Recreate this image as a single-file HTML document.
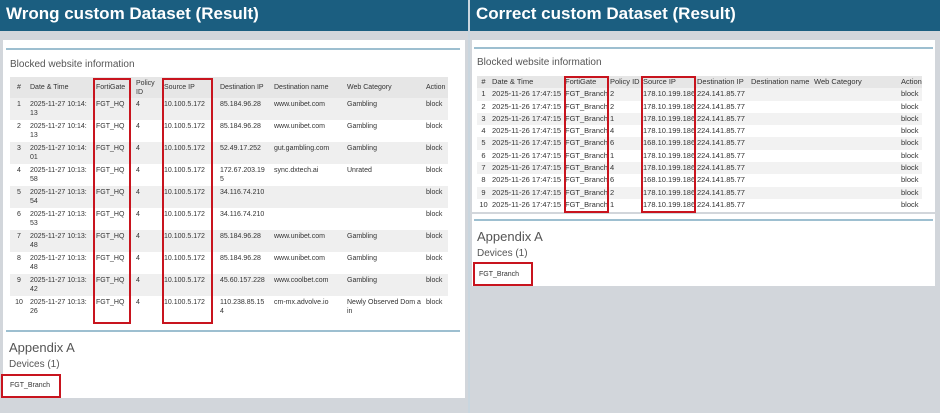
<!DOCTYPE html>
<html><head><meta charset="utf-8"><style>
*{margin:0;padding:0;box-sizing:border-box}
body{width:940px;height:413px;background:#d2d6db;font-family:"Liberation Sans",sans-serif;position:relative;overflow:hidden;color:#333}
.hdr{position:absolute;top:0;height:31px;background:#1b5e80;color:#fff;font-weight:bold;font-size:17px;line-height:27px;padding-left:6px}
.panel{position:absolute;background:#fff}
.bl{position:absolute;height:2px;background:#9dbfd0}
.t{position:absolute;font-size:10px;color:#555}
table{position:absolute;border-collapse:collapse;table-layout:fixed;font-size:7px;color:#333}
td{vertical-align:top;padding:2px 2px 0 2px;line-height:9px;overflow:hidden;white-space:nowrap}
.L td{height:22px;white-space:normal;word-break:break-all}
.L tr:nth-child(even) td{background:#efefef}
.L tr.h td{background:#e6e6e6;height:21px;vertical-align:middle;padding-top:0;word-break:normal}
.R td{height:12.3px;padding:1px 2px 0 2px;line-height:10px;font-size:7.5px}
.R tr:nth-child(even) td{background:#f2f2f2}
.R tr.h td{background:#e6e6e6}
.box{position:absolute;border:2px solid #c8141e}
</style></head><body>
<div class="hdr" style="left:0;width:468px">Wrong custom Dataset (Result)</div>
<div class="hdr" style="left:470px;width:470px">Correct custom Dataset (Result)</div>
<div style="position:absolute;left:468px;top:0;width:2px;height:413px;background:#c9d6df"></div>

<div class="panel" style="left:3px;top:40px;width:462px;height:358px"></div>
<div class="bl" style="left:6px;top:48px;width:454px"></div>
<div class="t" style="left:10px;top:59px">Blocked website information</div>
<table class="L" style="left:10px;top:77px;width:438px">
<colgroup><col style="width:18px"><col style="width:66px"><col style="width:40px"><col style="width:28px"><col style="width:56px"><col style="width:54px"><col style="width:73px"><col style="width:79px"><col style="width:24px"></colgroup>
<tr class="h"><td style="text-align:center">#</td><td>Date &amp; Time</td><td>FortiGate</td><td>Policy ID</td><td>Source IP</td><td>Destination IP</td><td>Destination name</td><td>Web Category</td><td>Action</td></tr>
<tr><td style="text-align:center">1</td><td>2025-11-27 10:14: 13</td><td>FGT_HQ</td><td>4</td><td>10.100.5.172</td><td>85.184.96.28</td><td>www.unibet.com</td><td>Gambling</td><td>block</td></tr>
<tr><td style="text-align:center">2</td><td>2025-11-27 10:14: 13</td><td>FGT_HQ</td><td>4</td><td>10.100.5.172</td><td>85.184.96.28</td><td>www.unibet.com</td><td>Gambling</td><td>block</td></tr>
<tr><td style="text-align:center">3</td><td>2025-11-27 10:14: 01</td><td>FGT_HQ</td><td>4</td><td>10.100.5.172</td><td>52.49.17.252</td><td>gut.gambling.com</td><td>Gambling</td><td>block</td></tr>
<tr><td style="text-align:center">4</td><td>2025-11-27 10:13: 58</td><td>FGT_HQ</td><td>4</td><td>10.100.5.172</td><td>172.67.203.19 5</td><td>sync.dxtech.ai</td><td>Unrated</td><td>block</td></tr>
<tr><td style="text-align:center">5</td><td>2025-11-27 10:13: 54</td><td>FGT_HQ</td><td>4</td><td>10.100.5.172</td><td>34.116.74.210</td><td></td><td></td><td>block</td></tr>
<tr><td style="text-align:center">6</td><td>2025-11-27 10:13: 53</td><td>FGT_HQ</td><td>4</td><td>10.100.5.172</td><td>34.116.74.210</td><td></td><td></td><td>block</td></tr>
<tr><td style="text-align:center">7</td><td>2025-11-27 10:13: 48</td><td>FGT_HQ</td><td>4</td><td>10.100.5.172</td><td>85.184.96.28</td><td>www.unibet.com</td><td>Gambling</td><td>block</td></tr>
<tr><td style="text-align:center">8</td><td>2025-11-27 10:13: 48</td><td>FGT_HQ</td><td>4</td><td>10.100.5.172</td><td>85.184.96.28</td><td>www.unibet.com</td><td>Gambling</td><td>block</td></tr>
<tr><td style="text-align:center">9</td><td>2025-11-27 10:13: 42</td><td>FGT_HQ</td><td>4</td><td>10.100.5.172</td><td>45.60.157.228</td><td>www.coolbet.com</td><td>Gambling</td><td>block</td></tr>
<tr><td style="text-align:center">10</td><td>2025-11-27 10:13: 26</td><td>FGT_HQ</td><td>4</td><td>10.100.5.172</td><td>110.238.85.15 4</td><td>cm-mx.advolve.io</td><td>Newly Observed Dom ain</td><td>block</td></tr>
</table>
<div class="box" style="left:93px;top:78px;width:38px;height:246px"></div>
<div class="box" style="left:162px;top:78px;width:51px;height:246px"></div>
<div class="bl" style="left:6px;top:330px;width:454px"></div>
<div class="t" style="left:9px;top:340px;font-size:13px">Appendix A</div>
<div class="t" style="left:9px;top:359px;font-size:10px">Devices (1)</div>
<div class="box" style="left:1px;top:374px;width:60px;height:24px"></div>
<div style="position:absolute;left:10px;top:382px;font-size:7px;color:#333">FGT_Branch</div>

<div class="panel" style="left:472px;top:40px;width:463px;height:172px"></div>
<div class="panel" style="left:472px;top:214px;width:463px;height:72px"></div>
<div class="bl" style="left:474px;top:47px;width:459px"></div>
<div class="t" style="left:477px;top:57px">Blocked website information</div>
<table class="R" style="left:477px;top:76px;width:445px">
<colgroup><col style="width:13px"><col style="width:73px"><col style="width:45px"><col style="width:33px"><col style="width:54px"><col style="width:54px"><col style="width:63px"><col style="width:87px"><col style="width:23px"></colgroup>
<tr class="h"><td style="text-align:center">#</td><td>Date &amp; Time</td><td>FortiGate</td><td>Policy ID</td><td>Source IP</td><td>Destination IP</td><td>Destination name</td><td>Web Category</td><td>Action</td></tr>
<tr><td style="text-align:center">1</td><td>2025-11-26 17:47:15</td><td>FGT_Branch</td><td>2</td><td>178.10.199.186</td><td>224.141.85.77</td><td></td><td></td><td>block</td></tr>
<tr><td style="text-align:center">2</td><td>2025-11-26 17:47:15</td><td>FGT_Branch</td><td>2</td><td>178.10.199.186</td><td>224.141.85.77</td><td></td><td></td><td>block</td></tr>
<tr><td style="text-align:center">3</td><td>2025-11-26 17:47:15</td><td>FGT_Branch</td><td>1</td><td>178.10.199.186</td><td>224.141.85.77</td><td></td><td></td><td>block</td></tr>
<tr><td style="text-align:center">4</td><td>2025-11-26 17:47:15</td><td>FGT_Branch</td><td>4</td><td>178.10.199.186</td><td>224.141.85.77</td><td></td><td></td><td>block</td></tr>
<tr><td style="text-align:center">5</td><td>2025-11-26 17:47:15</td><td>FGT_Branch</td><td>6</td><td>168.10.199.186</td><td>224.141.85.77</td><td></td><td></td><td>block</td></tr>
<tr><td style="text-align:center">6</td><td>2025-11-26 17:47:15</td><td>FGT_Branch</td><td>1</td><td>178.10.199.186</td><td>224.141.85.77</td><td></td><td></td><td>block</td></tr>
<tr><td style="text-align:center">7</td><td>2025-11-26 17:47:15</td><td>FGT_Branch</td><td>4</td><td>178.10.199.186</td><td>224.141.85.77</td><td></td><td></td><td>block</td></tr>
<tr><td style="text-align:center">8</td><td>2025-11-26 17:47:15</td><td>FGT_Branch</td><td>6</td><td>168.10.199.186</td><td>224.141.85.77</td><td></td><td></td><td>block</td></tr>
<tr><td style="text-align:center">9</td><td>2025-11-26 17:47:15</td><td>FGT_Branch</td><td>2</td><td>178.10.199.186</td><td>224.141.85.77</td><td></td><td></td><td>block</td></tr>
<tr><td style="text-align:center">10</td><td>2025-11-26 17:47:15</td><td>FGT_Branch</td><td>1</td><td>178.10.199.186</td><td>224.141.85.77</td><td></td><td></td><td>block</td></tr>
</table>
<div class="box" style="left:564px;top:76px;width:45px;height:137px"></div>
<div class="box" style="left:641px;top:76px;width:55px;height:137px"></div>
<div class="bl" style="left:474px;top:219px;width:459px"></div>
<div class="t" style="left:477px;top:229px;font-size:13px">Appendix A</div>
<div class="t" style="left:477px;top:248px;font-size:10px">Devices (1)</div>
<div class="box" style="left:473px;top:262px;width:60px;height:24px"></div>
<div style="position:absolute;left:479px;top:271px;font-size:7px;color:#333">FGT_Branch</div>
</body></html>
